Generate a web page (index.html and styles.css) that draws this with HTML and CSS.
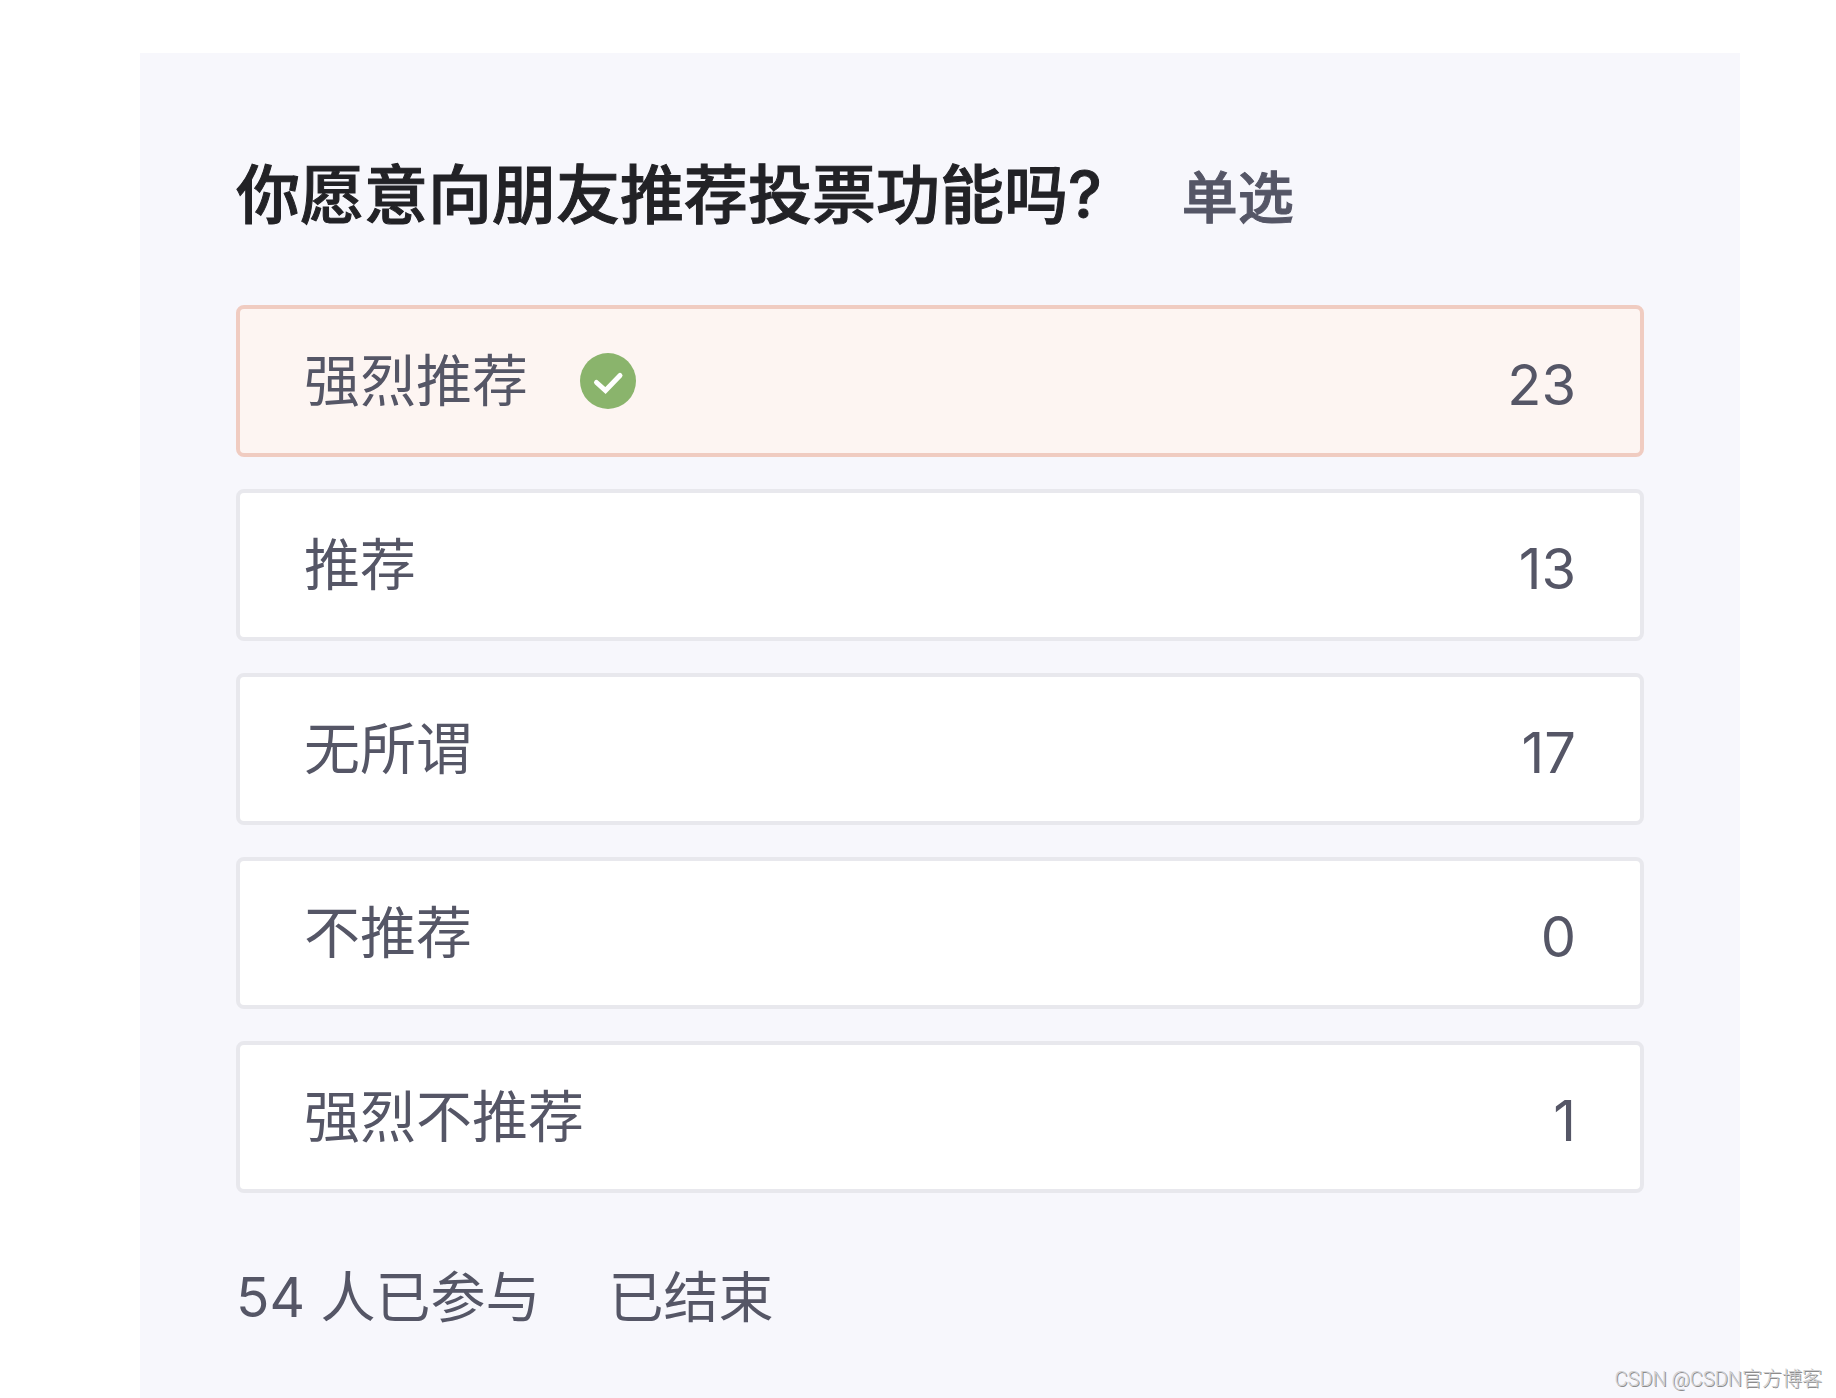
FILE: index.html
```html
<!DOCTYPE html>
<html lang="zh-CN">
<head>
  <meta charset="UTF-8">
  <meta name="viewport" content="width=device-width, initial-scale=1">
  <title>投票</title>
  <link rel="stylesheet" href="styles.css">
</head>
<body>
  <main class="vote">
    <header class="vote-head">
      <h1 class="vote-title">你愿意向朋友推荐投票功能吗?</h1>
      <span class="vote-type">单选</span>
    </header>
    <ul class="vote-list">
      <li class="vote-item selected">
        <span class="name">强烈推荐</span>
        <svg class="check" viewBox="0 0 56 56" role="img" aria-label="已选">
          <circle cx="28" cy="28" r="28" fill="#8ab46c"/>
          <path d="M16.500 29.500L25.500 37.500L40 22.500" fill="none" stroke="#fff" stroke-width="5" stroke-linecap="round" stroke-linejoin="miter"/>
        </svg>
        <span class="count">23</span>
      </li>
      <li class="vote-item">
        <span class="name">推荐</span>
        <span class="count">13</span>
      </li>
      <li class="vote-item">
        <span class="name">无所谓</span>
        <span class="count">17</span>
      </li>
      <li class="vote-item">
        <span class="name">不推荐</span>
        <span class="count">0</span>
      </li>
      <li class="vote-item">
        <span class="name">强烈不推荐</span>
        <span class="count">1</span>
      </li>
    </ul>
    <footer class="vote-foot">
      <span>54 人已参与</span>
      <span>已结束</span>
    </footer>
  </main>
  <div class="watermark">CSDN @CSDN官方博客</div>
</body>
</html>
```
FILE: styles.css
```css
* {
  box-sizing: border-box;
}
body {
  margin: 0;
  background: #fff;
  color: #555666;
  font-family: Inter, "Noto Sans CJK SC", sans-serif;
  font-size: 56px;
  line-height: 80px;
}
.vote {
  min-height: calc(100vh - 53px);
  margin: 53px 96px 0 140px;
  padding: 102px 96px 60px;
  background: #f7f7fc;
}
.vote-head {
  display: flex;
  align-items: baseline;
  gap: 80px;
  margin-bottom: 67px;
}
.vote-title {
  margin: 0;
  color: #222226;
  font-size: 64px;
  font-weight: 500;
  -webkit-text-stroke: 1px #222226;
}
.vote-type {
  font-weight: 500;
  -webkit-text-stroke: 1px #555666;
}
.vote-list {
  display: flex;
  flex-direction: column;
  gap: 32px;
  margin: 0;
  padding: 0;
  list-style: none;
}
.vote-item {
  display: flex;
  align-items: center;
  height: 152px;
  padding: 0 64px;
  background: #fff;
  border: 4px solid #e8e8ed;
  border-radius: 8px;
}
.vote-item.selected {
  background: #fdf5f2;
  border-color: #f0ccc1;
}
.check {
  width: 56px;
  height: 56px;
  margin-left: 52px;
}
.count {
  margin-left: auto;
  padding-top: 8px;
}
.vote-foot {
  display: flex;
  gap: 68px;
  margin-top: 64px;
  font-size: 55px;
}
.watermark {
  position: absolute;
  right: 14px;
  bottom: 5px;
  color: #d0d0d2;
  font-family: Roboto, "Noto Sans CJK SC", sans-serif;
  font-size: 20px;
  font-weight: 300;
  line-height: 28px;
  text-shadow: 1px 1px 0 #8c8c8c;
}
```
